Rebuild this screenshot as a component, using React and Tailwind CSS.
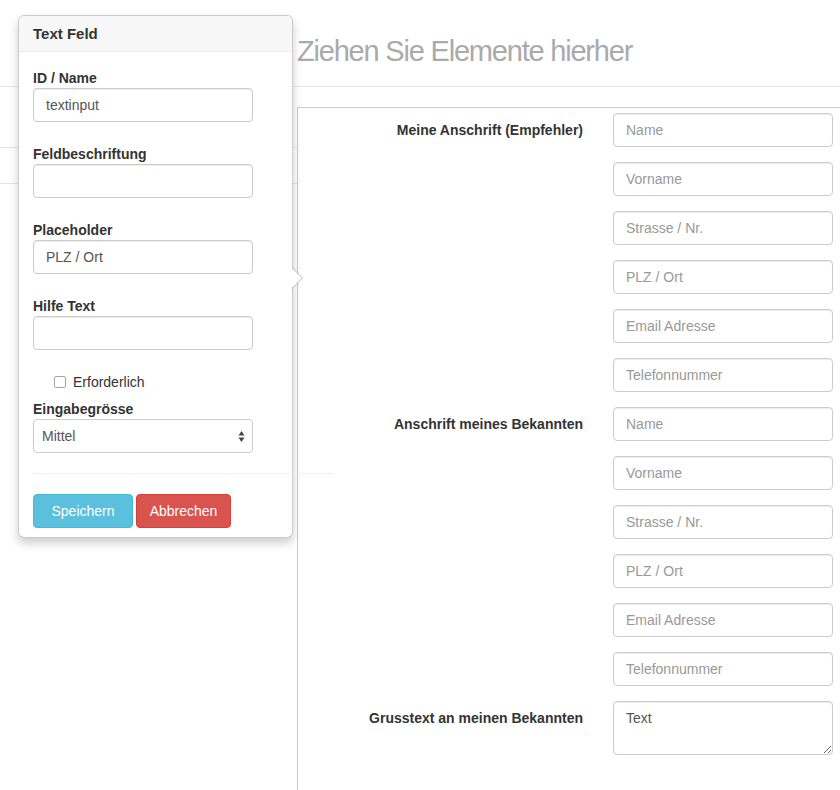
import React from "react";

const inputCls =
  "block w-[220px] h-[34px] px-[12px] border border-[#ccc] rounded-[4px] bg-white text-[14px] text-[#555] shadow-[inset_0_1px_1px_rgba(0,0,0,0.075)] placeholder:text-[#999] outline-none";

function FieldGroup({ label, children }) {
  return (
    <div>
      <div className="text-[14px] leading-[20px] font-bold text-[#333]">{label}</div>
      {children}
    </div>
  );
}

export default function App() {
  const groups = [
    {
      label: "Meine Anschrift (Empfehler)",
      fields: ["Name", "Vorname", "Strasse / Nr.", "PLZ / Ort", "Email Adresse", "Telefonnummer"],
    },
    {
      label: "Anschrift meines Bekannten",
      fields: ["Name", "Vorname", "Strasse / Nr.", "PLZ / Ort", "Email Adresse", "Telefonnummer"],
    },
  ];

  return (
    <div className="relative w-[840px] h-[790px] overflow-hidden bg-white font-['Liberation_Sans',Arial,sans-serif] text-[#333]">
      {/* Header */}
      <div className="h-[86px] pl-[297px] pt-[36px]">
        <h2 className="text-[29px] leading-[30px] tracking-[-1.2px] text-[#aaa] whitespace-nowrap">
          Ziehen Sie Elemente hierher
        </h2>
      </div>

      <div className="flex border-t border-[#e5e5e5]">
        {/* Sidebar (mostly hidden under popover) */}
        <div className="w-[297px] shrink-0">
          <div className="h-[61px] border-b border-[#e5e5e5]" />
          <div className="h-[36px] border-b border-[#e5e5e5]" />
        </div>

        {/* Drop zone */}
        <div className="mt-[20px] flex-1 h-[700px] border-l border-t border-[#ccc] pt-[5px]">
          <div className="flex flex-col gap-[15px]">
            {groups.map((g, gi) => (
              <div key={gi} className="flex">
                <div className="w-[285px] pt-[7px] text-right text-[14px] leading-[20px] font-bold text-[#333]">
                  {g.label}
                </div>
                <div className="ml-[30px] flex flex-col gap-[15px]">
                  {g.fields.map((f, fi) => (
                    <input key={fi} type="text" placeholder={f} className={inputCls} />
                  ))}
                </div>
              </div>
            ))}
            <div className="flex">
              <div className="w-[285px] pt-[7px] text-right text-[14px] leading-[20px] font-bold text-[#333]">
                Grusstext an meinen Bekannten
              </div>
              <div className="ml-[30px]">
                <textarea
                  defaultValue="Text"
                  className="block w-[220px] h-[54px] px-[12px] py-[6px] border border-[#ccc] rounded-[4px] bg-white text-[14px] leading-[20px] text-[#555] shadow-[inset_0_1px_1px_rgba(0,0,0,0.075)] outline-none resize-y"
                />
              </div>
            </div>
          </div>
        </div>
      </div>

      {/* Popover */}
      <div className="absolute left-[18px] top-[15px] w-[275px] bg-white border border-[rgba(0,0,0,0.2)] rounded-[6px] shadow-[0_5px_10px_rgba(0,0,0,0.2)]">
        {/* arrow */}
        <div className="absolute right-[-11px] top-[251px] w-0 h-0 border-y-[11px] border-y-transparent border-l-[11px] border-l-[rgba(0,0,0,0.25)]" />
        <div className="absolute right-[-10px] top-[252px] w-0 h-0 border-y-[10px] border-y-transparent border-l-[10px] border-l-white" />

        <div className="h-[36px] px-[14px] pt-[1px] flex items-center bg-[#f7f7f7] border-b border-[#ebebeb] rounded-t-[5px] text-[15px] font-bold text-[#333]">
          Text Feld
        </div>

        <div className="px-[14px] pt-[16px] pb-[9px]">
          <div className="flex flex-col gap-[22px]">
            <FieldGroup label="ID / Name">
              <input type="text" defaultValue="textinput" className={inputCls} />
            </FieldGroup>
            <FieldGroup label="Feldbeschriftung">
              <input type="text" className={inputCls} />
            </FieldGroup>
            <FieldGroup label="Placeholder">
              <input type="text" defaultValue="PLZ / Ort" className={inputCls} />
            </FieldGroup>
            <FieldGroup label="Hilfe Text">
              <input type="text" className={inputCls} />
            </FieldGroup>
          </div>

          <div className="mt-[22px] h-[20px] flex items-center pl-[21px] text-[14px] text-[#333]">
            <span className="w-[12px] h-[12px] border border-[#a6a6a6] rounded-[2px] bg-white" />
            <span className="ml-[7px]">Erforderlich</span>
          </div>

          <div className="mt-[7px]">
            <FieldGroup label="Eingabegrösse">
              <div className="w-[220px] h-[34px] flex items-center justify-between pl-[8px] pr-[7px] border border-[#ccc] rounded-[4px] bg-white text-[14px] text-[#555]">
                <span>Mittel</span>
                <svg width="7" height="13" viewBox="0 0 7 13">
                  <path d="M3.5 1 L6.5 5.5 L0.5 5.5 Z" fill="#444" />
                  <path d="M3.5 12 L6.5 7.5 L0.5 7.5 Z" fill="#444" />
                </svg>
              </div>
            </FieldGroup>
          </div>

          <div className="mt-[20px] w-[300px] border-t border-[#eee]" />

          <div className="mt-[20px] flex gap-[3px]">
            <button className="w-[100px] h-[34px] rounded-[4px] bg-[#5bc0de] border border-[#46b8da] text-white text-[14px]">
              Speichern
            </button>
            <button className="w-[95px] h-[34px] rounded-[4px] bg-[#d9534f] border border-[#d43f3a] text-white text-[14px]">
              Abbrechen
            </button>
          </div>
        </div>
      </div>
    </div>
  );
}
